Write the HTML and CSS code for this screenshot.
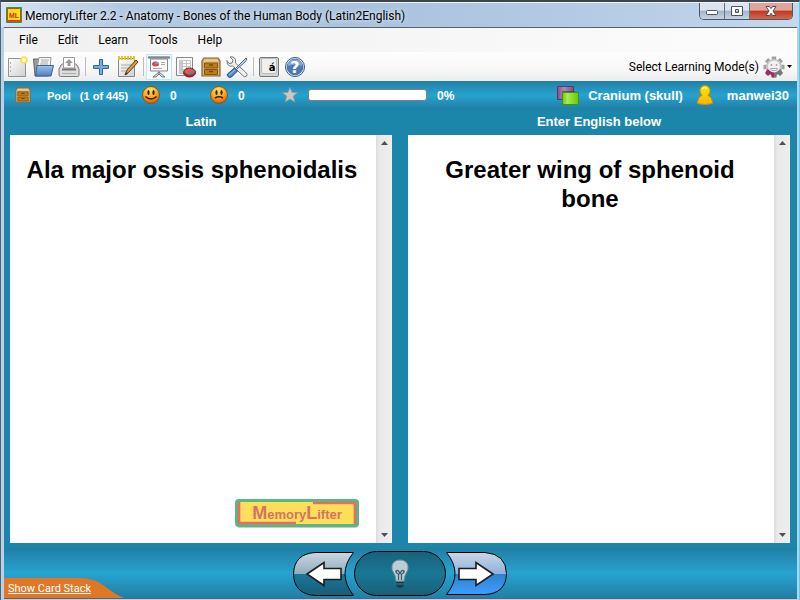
FILE: index.html
```html
<!DOCTYPE html>
<html lang="en">
<head>
<meta charset="utf-8">
<title>MemoryLifter 2.2</title>
<link rel="stylesheet" href="styles.css">
</head>
<body>
<svg class="defs" width="0" height="0" aria-hidden="true">
  <defs>
    <linearGradient id="paper" x2="1" y2="1"><stop stop-color="#fff"/><stop offset="1" stop-color="#cfcfcf"/></linearGradient>
    <linearGradient id="blue" x2="0" y2="1"><stop stop-color="#a3c3ea"/><stop offset="1" stop-color="#4c7fc4"/></linearGradient>
    <radialGradient id="face" cx=".45" cy=".2" r=".85"><stop stop-color="#ffe15a"/><stop offset=".5" stop-color="#fbaa2c"/><stop offset="1" stop-color="#c9520c"/></radialGradient>
    <linearGradient id="person" x2="0" y2="1"><stop stop-color="#ffe800"/><stop offset="1" stop-color="#ffb400"/></linearGradient>
    <linearGradient id="green" x2="1"><stop stop-color="#6fc617"/><stop offset=".3" stop-color="#a6ee4c"/><stop offset="1" stop-color="#68c60c"/></linearGradient>
    <linearGradient id="mauve" x2="1"><stop stop-color="#7b5288"/><stop offset=".4" stop-color="#ad8cb6"/><stop offset="1" stop-color="#775080"/></linearGradient>
    <linearGradient id="back" x2="0" y2="1"><stop stop-color="#ccd6de"/><stop offset=".5" stop-color="#8faebe"/><stop offset=".51" stop-color="#19789a"/><stop offset="1" stop-color="#185d75"/></linearGradient>
    <linearGradient id="hint" x2="0" y2="1"><stop stop-color="#196178"/><stop offset=".5" stop-color="#197796"/><stop offset="1" stop-color="#195f77"/></linearGradient>
    <linearGradient id="next" x2="0" y2="1"><stop stop-color="#cbd6e4"/><stop offset=".5" stop-color="#8eb3dc"/><stop offset=".51" stop-color="#2c82cc"/><stop offset="1" stop-color="#3f9dff"/></linearGradient>
    <symbol id="drawer" viewBox="0 0 20 20">
      <path d="M3 1h14l2 3v15H1V4z" fill="#d9b36a" stroke="#7d6438" stroke-width="1.200"/>
      <path d="M3 3.500h14" stroke="#e8cd92" stroke-width="2"/>
      <path d="M3.500 6h13v5h-13zM3.500 12.500h13v5h-13z" fill="#c27a12" stroke="#80561c"/>
      <path d="M8 8h4M8 14.500h4" stroke="#704a14" stroke-width="1.300"/>
    </symbol>
  </defs>
</svg>
<div class="window">
  <header class="titlebar">
    <svg class="app-icon" viewBox="0 0 16 16" width="16" height="16"><rect width="16" height="16" rx="1" fill="#2f9a3e"/><path d="M1 1h12v2h2v12H1z" fill="#e23c22"/><rect x="2" y="2" width="12" height="11" fill="#ffdf16"/><text x="8" y="11" class="mini">ML</text></svg>
    <h1>MemoryLifter 2.2 - Anatomy - Bones of the Human Body (Latin2English)</h1>
    <div class="window-buttons">
      <button aria-label="Minimize"><svg viewBox="0 0 14 12" width="14" height="12"><rect x="1.500" y="5.500" width="11" height="4" rx="1" fill="#fff" stroke="#4c5464"/></svg></button>
      <button aria-label="Maximize"><svg viewBox="0 0 14 12" width="14" height="12"><path d="M1.500 1.500h11v9h-11zM5.500 4.500v3h3v-3z" fill="#fff" fill-rule="evenodd" stroke="#4c5464"/></svg></button>
      <button class="close" aria-label="Close"><svg viewBox="0 0 14 12" width="14" height="12"><path d="M2 1.500h3.500L7 3.600l1.500-2.100H12L9 6l3 4.500H8.500L7 8.400l-1.500 2.100H2L5 6z" fill="#fff" stroke="#55484e"/></svg></button>
    </div>
  </header>
  <div class="client">
    <nav class="menu">
      <button>File</button><button>Edit</button><button>Learn</button><button>Tools</button><button>Help</button>
    </nav>
    <div class="toolbar">
      <button aria-label="New"><svg viewBox="0 0 24 24"><path d="M3.500 3.500h17v18h-17z" fill="url(#paper)" stroke="#939393"/><path d="M5 8h1M5 12h1M5 16h1" stroke="#777"/><circle cx="19" cy="5" r="3" fill="#fff7b0" stroke="#f2df55" stroke-width="1.600"/></svg></button>
      <button aria-label="Open"><svg viewBox="0 0 24 24"><path d="M2.500 4h6l1 2h8v15H4z" fill="#9c9c9c" stroke="#666"/><path d="M8 2.500h12l-1 11H6z" fill="#f5f5f5" stroke="#999"/><path d="M10 5h8M10 7h7M9 9h8" stroke="#aaa"/><path d="M6 10.500h16.500l-2.500 10.500H4.500z" fill="url(#blue)" stroke="#3465a4"/></svg></button>
      <button aria-label="Print"><svg viewBox="0 0 24 24"><path d="M4 10l3-2h10l3 2 2 4v6q0 1.500-1.500 1.500h-17Q2 21.500 2 20v-6z" fill="#dedede" stroke="#7a7a7a"/><path d="M6.500 2.500h11V13h-11z" fill="#fff" stroke="#999"/><path d="M12 4l4 4h-2.500v3h-3V8H8z" fill="#999"/><path d="M5 14.500h14" stroke="#777" stroke-width="2"/><path d="M5 18.500h14" stroke="#aaa"/></svg></button>
      <hr>
      <button aria-label="Add"><svg viewBox="0 0 24 24"><path d="M10.500 4.500h3v6h6v3h-6v6h-3v-6h-6v-3h6z" fill="#78a9df" stroke="#3166ad"/></svg></button>
      <button aria-label="Edit card"><svg viewBox="0 0 24 24"><path d="M3.500 3.500h16v18h-16z" fill="url(#paper)" stroke="#898989"/><path d="M3 3h17" stroke="#ddc82f" stroke-width="4" stroke-dasharray="2 1"/><path d="M6 10h11M6 13h9M6 16h6" stroke="#aaa"/><path d="M10 20l2-5 9-10 2 2-9 10z" fill="#d99c45" stroke="#664018"/><path d="M10 20l1-3 2 2z" fill="#333"/></svg></button>
      <hr>
      <button class="active" aria-label="Presentation"><svg viewBox="0 0 24 24"><path d="M12 15v5M12 17l-6 5h3l3-3 3 3h3z" fill="#ddd" stroke="#777"/><path d="M3.500 4h17v12h-17z" fill="#f7f7f7" stroke="#888"/><path d="M2 2.500h20" stroke="#888" stroke-width="2.500" stroke-linecap="round"/><ellipse cx="8.500" cy="9" rx="3.500" ry="2.500" fill="#d64a4a"/><path d="M8.500 9V6.500q3 0 3.500 2.500z" fill="#729fcf"/><path d="M14 7.500h4M14 9.500h4M6 13.500h9" stroke="#aaa"/></svg></button>
      <button aria-label="Statistics"><svg viewBox="0 0 24 24"><path d="M3.500 2.500h16v18h-16z" fill="#fafafa" stroke="#898989"/><path d="M6.500 5.500h3v13h-3z" fill="#ccc"/><path d="M6.500 5.500h11v13h-11zM9.500 5v13M13.500 5v13M7 8.500h10M7 11.500h10M7 14.500h10" fill="none" stroke="#c4c4c4"/><ellipse cx="16.500" cy="17.500" rx="6" ry="4.500" fill="#a92828" stroke="#702020"/><ellipse cx="16.500" cy="16.500" rx="5" ry="3" fill="#df5757"/><path d="M16.500 16.500h5q-1 3-5 3z" fill="#438d9c"/></svg></button>
      <button aria-label="Boxes"><svg viewBox="0 0 24 24"><use href="#drawer" x="2" y="2" width="20" height="20"/></svg></button>
      <button aria-label="Settings"><svg viewBox="0 0 24 24"><path d="M5 2l3 3-1 3-3 .5-2-3q-.5 4 2.500 5.500 2 .5 3-.2l10 9.500q2 2.500 4 .8t-1-4L10.500 8q1-4-1.500-5.500Q7 1.300 5 2z" fill="#eee" stroke="#777"/><path d="M11 13l8-8 2-2 1 1-2 3-8 7" fill="#c5d5e8" stroke="#426797"/><path d="M2.500 19l7-6 3 3-6 6q-2 1-3.500-.5t-.5-2.500z" fill="#4f86cb" stroke="#204a87"/><path d="M4 20l6-5" stroke="#a8caee"/></svg></button>
      <hr>
      <button aria-label="Character map"><svg viewBox="0 0 24 24"><rect x="2.500" y="2.500" width="19" height="19" rx="1.500" fill="#d5d6d2" stroke="#777"/><rect x="4.500" y="3.500" width="15" height="15" rx="1.500" fill="#f0f1ee" stroke="#bbb"/><text x="15" y="16" class="key">á</text></svg></button>
      <button aria-label="Help"><svg viewBox="0 0 24 24"><circle cx="12" cy="12" r="9.500" fill="#e8f0fa" stroke="#2d5689"/><circle cx="12" cy="12" r="7.800" fill="#5079b4" stroke="#4470aa"/><path d="M4.500 11q0-6 7.500-6.500 7 .5 7.500 6.500-7-3-15 0z" fill="#88a9d5"/><text x="12" y="18" class="question">?</text></svg></button>
      <button class="modes">Select Learning Mode(s)
        <svg class="gear" viewBox="0 0 24 24" width="24" height="24"><path d="M12 1.500v5M12 17.500v5M1.500 12h5M17.500 12h5M4.600 4.600l3 3M16.400 16.400l3 3M4.600 19.400l3-3M16.400 7.600l3-3" stroke="#a0a0a0" stroke-width="4.500"/><circle cx="12" cy="12" r="8" fill="#c4c4c4"/><path d="M12 16v6.500H9.700l-.5-2.800-1.500-.5-2 1.500-2.500-2.500 2-4z" fill="#a62462"/><path d="M12 16v6.500h2.300l.5-2.800 1.500-.5 2 1.500 2.500-2.500-2-4z" fill="#777"/><circle cx="12" cy="11.500" r="6" fill="#f1f1f1"/><path d="M9.500 9v2M14.500 9v2" stroke="#aaa" stroke-width="1.500"/><path d="M8.500 13.500h7l-1 2h-5z" fill="#fff" stroke="#aaa"/></svg>
        <svg viewBox="0 0 5 3" width="5" height="3" class="caret"><path d="M0 0h5L2.500 3z"/></svg>
      </button>
    </div>
    <section class="status" aria-label="Progress">
      <div class="group pool"><svg viewBox="0 0 20 20" width="16" height="16"><use href="#drawer"/></svg><span>Pool</span><span>(1 of 445)</span></div>
      <div class="group right-count"><svg viewBox="0 0 20 20" width="20" height="20"><circle cx="10" cy="10" r="8.500" fill="url(#face)" stroke="#96500f"/><ellipse cx="7.500" cy="7.500" rx="1.100" ry="2.500" fill="#3b1b00"/><ellipse cx="12.500" cy="7.500" rx="1.100" ry="2.500" fill="#3b1b00"/><path d="M4.500 11.500q5.500 5 11 0" fill="none" stroke="#4a1d00" stroke-width="1.600"/></svg><span>0</span></div>
      <div class="group wrong-count"><svg viewBox="0 0 20 20" width="20" height="20"><circle cx="10" cy="10" r="8.500" fill="url(#face)" stroke="#96500f"/><ellipse cx="7.500" cy="7.500" rx="1.100" ry="2.500" fill="#3b1b00"/><ellipse cx="12.500" cy="7.500" rx="1.100" ry="2.500" fill="#3b1b00"/><path d="M6 13q4-2.500 8 0" fill="none" stroke="#4a1d00" stroke-width="1.500"/></svg><span>0</span></div>
      <div class="group score"><svg viewBox="0 0 16 16" width="16" height="16"><path d="M8 .5l2.200 5h5.300l-4.200 3.600 1.600 6L8 12l-4.900 3.100 1.600-6L.5 5.500h5.300z" fill="#c9c9c9" stroke="#8d979b" stroke-width=".8"/></svg><div class="bar" role="progressbar" aria-label="Score" aria-valuenow="0"></div><span>0%</span></div>
      <div class="group chapter"><svg viewBox="0 0 24 20" width="24" height="20"><path d="M1.500 1.500h16v13h-16z" fill="url(#mauve)" stroke="#5c3868"/><path d="M6 6h13v11H6z" fill="#393b43" opacity=".6"/><path d="M6.500 7.500h16v12h-16z" fill="url(#green)" stroke="#439406"/></svg><span>Cranium (skull)</span></div>
      <div class="group user"><svg viewBox="0 0 18 20" width="18" height="20"><path d="M6 10.500Q3.500 8 4 4.500 5 .5 9 .5t5 4Q14.500 8 12 10.500q4 1.500 4.500 8-7.500 2-15 0Q2 12 6 10.500z" fill="url(#person)" stroke="#d78a00"/><path d="M6 4q3-3 5 0" fill="none" stroke="#fff58a" stroke-width="1.500"/></svg><span>manwei30</span></div>
    </section>
    <main class="cards">
      <section class="side">
        <h2>Latin</h2>
        <div class="card">
          <div class="page">
            <p>Ala major ossis sphenoidalis</p>
            <svg class="brand" viewBox="0 0 126 30" width="126" height="30"><rect x="2" y="2" width="123" height="28" rx="4" fill="#c9c9c9"/><rect x="1" y="1" width="124" height="28" rx="4" fill="#58b885"/><path d="M4 4h117v22H4z" fill="#ffdf59"/><path d="M5 4v21h57M79 5h42v21" fill="none" stroke="#e96c63" stroke-width="2.600"/><text x="63" y="21"><tspan class="cap">M</tspan>emory<tspan class="cap">L</tspan>ifter</text></svg>
          </div>
          <div class="scroll"><button aria-label="Scroll up"><svg viewBox="0 0 7 4" width="7" height="4"><path d="M0 4h7L3.500 0z"/></svg></button><button aria-label="Scroll down"><svg viewBox="0 0 7 4" width="7" height="4"><path d="M0 0h7L3.500 4z"/></svg></button></div>
        </div>
      </section>
      <section class="side">
        <h2>Enter English below</h2>
        <div class="card">
          <div class="page"><p>Greater wing of sphenoid bone</p></div>
          <div class="scroll"><button aria-label="Scroll up"><svg viewBox="0 0 7 4" width="7" height="4"><path d="M0 4h7L3.500 0z"/></svg></button><button aria-label="Scroll down"><svg viewBox="0 0 7 4" width="7" height="4"><path d="M0 0h7L3.500 4z"/></svg></button></div>
        </div>
      </section>
    </main>
    <footer class="controls">
      <a class="stack" href="#stack"><svg viewBox="0 0 120 20" width="120" height="20"><path d="M0 0h76q15 0 26 9 10 8 18 11H0z" fill="#df7726"/></svg><span>Show Card Stack</span></a>
      <div class="pad">
        <button aria-label="Previous"><svg viewBox="0 0 61 44" width="61" height="44"><path d="M22 .5h38.500q-17 21 0 43H22Q1 42 .5 22 1 2 22 .5z" fill="url(#back)" stroke="#000"/><path d="M14 22L31 10.500v6h17v11H31v6z" fill="#fff" stroke="#1c1c1c" stroke-width="1.600"/></svg></button>
        <button aria-label="Hint"><svg viewBox="0 0 92 46" width="92" height="46"><rect x=".5" y=".5" width="91" height="44" rx="22" fill="url(#hint)" stroke="#000"/><path d="M42 30q0-5-2.500-8.500-2-3-1.500-6 1-6.500 8-6.500t8 6.500q.5 3-1.500 6Q50 25 50 30z" fill="#bccdd4" stroke="#75909b"/><path d="M44.500 29v-6q-3-1-2.500-3 2-2 4 2.500 2-4.500 4-2.500.500 2-2.500 3v6" fill="none" stroke="#326176" stroke-width="1.300"/><path d="M42 31h8v4l-3 2h-2l-3-2z" fill="#173f51"/><path d="M42 33h8" stroke="#50788a"/></svg></button>
        <button aria-label="Next"><svg viewBox="0 0 61 44" width="61" height="44"><path d="M39 .5H.5q17 21 0 42H39q21-1 21.500-21Q60 2 39 .5z" fill="url(#next)" stroke="#000"/><path d="M47 22L30 10.500v6H13v11h17v6z" fill="#fff" stroke="#1c1c1c" stroke-width="1.600"/></svg></button>
      </div>
    </footer>
  </div>
</div>
</body>
</html>
```
FILE: styles.css
```css
* { box-sizing: border-box; }
body { margin: 0; font: 12px/16px Roboto, sans-serif; color: #000; }
button { border: 0; padding: 0; background: none; color: inherit; font: inherit; }
svg { display: block; flex: none; }
h1, h2, p { margin: 0; }
.defs { position: absolute; }

.window {
  min-height: 100vh;
  display: flex;
  flex-direction: column;
  padding: 0 2px 1px 3px;
  background: #b9d0ea;
  border-top: 2px solid #3b444f;
  border-left: 1px solid #56616e;
  border-right: 1px solid #4fd0f0;
}
.titlebar {
  height: 25px;
  display: flex;
  align-items: center;
  gap: 3px;
  margin: 0 -2px 0 -3px;
  padding: 0 6px 0 5px;
  background: linear-gradient(90deg, #d6e3f2 0, #b3c9e2 15%, #a9c2de 45%, #b8cde6 80%, #c5d8ed);
  border-top: 1px solid #eef5fc;
}
.titlebar h1 { flex: 1; padding-top: 2px; font-size: 12px; font-weight: 400; white-space: nowrap; text-shadow: 0 0 5px #fff; }
.mini { font: bold 7px "Liberation Sans", sans-serif; text-anchor: middle; fill: #d02b12; }
.window-buttons {
  display: flex;
  align-self: flex-start;
  height: 17px;
  border: 1px solid #4e5765;
  border-top: 0;
  border-radius: 0 0 5px 5px;
  overflow: hidden;
}
.window-buttons button {
  width: 25px;
  display: grid;
  place-items: center;
  background: linear-gradient(#dbe4ee 45%, #a5b5c7 50%, #c4d4e4);
  border-right: 1px solid #68727f;
}
.window-buttons .close { width: 42px; border: 0; background: linear-gradient(#e0a59a 45%, #bb3a22 50%, #d4674c); }

.client {
  flex: 1;
  display: flex;
  flex-direction: column;
  background: #1c86aa;
  border-top: 1px solid #59636f;
  border-bottom: 1px solid #59636f;
}
.menu {
  height: 24px;
  display: flex;
  align-items: center;
  padding-left: 5px;
  background: linear-gradient(90deg, #f0f0f0, #fcfcfc);
}
.menu button { padding: 0 10px; }
.toolbar {
  height: 29px;
  display: flex;
  align-items: center;
  background: linear-gradient(#fdfdfd, #f8f8f8 60%, #ececec);
}
.toolbar > button { width: 26px; height: 26px; display: grid; place-items: center; }
.toolbar > button > svg { width: 24px; height: 24px; }
.toolbar .active { border: 1px solid #bde6fa; background: #f4fafd; }
.toolbar hr { width: 1px; height: 19px; margin: 0 2px 0 3px; border: 0; background: #bdbdbd; }
.toolbar .modes { width: auto; margin-left: auto; padding-right: 5px; display: flex; align-items: center; gap: 3px; }
.toolbar .modes .caret { width: 5px; height: 3px; margin-left: -2px; }
.key { font: bold 10px "DejaVu Sans", sans-serif; text-anchor: middle; }
.question { font: bold 16px "DejaVu Sans", sans-serif; text-anchor: middle; fill: #fff; }

.status {
  height: 28px;
  display: flex;
  align-items: center;
  padding: 0 8px 0 11px;
  background: linear-gradient(#217fa5, #27a3d0 50%, #217fa5);
  color: #fff;
  font: bold 13px/16px "Liberation Sans", sans-serif;
}
.group { display: flex; align-items: center; gap: 9px; white-space: nowrap; }
.group span { padding-top: 1px; }
.pool { width: 126px; font-size: 11px; }
.pool span:first-of-type { margin-left: 7px; }
.right-count, .wrong-count { width: 68px; font-size: 12px; }
.score { gap: 10px; margin-left: 5px; font-size: 12px; }
.bar { width: 119px; height: 12px; border: 1px solid #827f80; border-radius: 3px; background: #fff; }
.chapter { margin-left: auto; gap: 8px; }
.user { margin-left: 13px; gap: 13px; }

.cards { flex: 1; display: grid; grid-template-columns: 1fr 1fr; gap: 16px; padding: 0 7px 0 6px; }
.side { display: flex; flex-direction: column; }
.side h2 {
  height: 26px;
  color: #fff;
  font: bold 13px/26px "Liberation Sans", sans-serif;
  text-align: center;
}
.card { flex: 1; display: flex; background: #fff; }
.page {
  flex: 1;
  display: flex;
  flex-direction: column;
  justify-content: space-between;
  padding: 20px 16px 15px 14px;
  font: bold 24px/29px "Liberation Sans", sans-serif;
  text-align: center;
}
.brand { align-self: flex-end; }
.brand text { font: bold 13px "Liberation Sans", sans-serif; text-anchor: middle; fill: #d57266; }
.brand .cap { font-size: 18px; }
.scroll {
  width: 16px;
  display: flex;
  flex-direction: column;
  justify-content: space-between;
  background: linear-gradient(90deg, #dcdcdc, #e9e9e9 20%, #eee);
}
.scroll button { height: 16px; display: grid; place-items: center; fill: #505050; }

.controls {
  position: relative;
  height: 50px;
  margin-top: 5px;
  display: flex;
  justify-content: center;
  background: linear-gradient(#217fa5, #27a3d0 50%, #217fa5);
}
.pad { display: flex; align-items: center; padding: 2px 2px 0 0; }
.stack {
  position: absolute;
  left: 0;
  bottom: 0;
  color: #fff;
  font-size: 11px;
}
.stack span { position: absolute; left: 4px; top: 3px; white-space: nowrap; text-decoration: underline; }
```
